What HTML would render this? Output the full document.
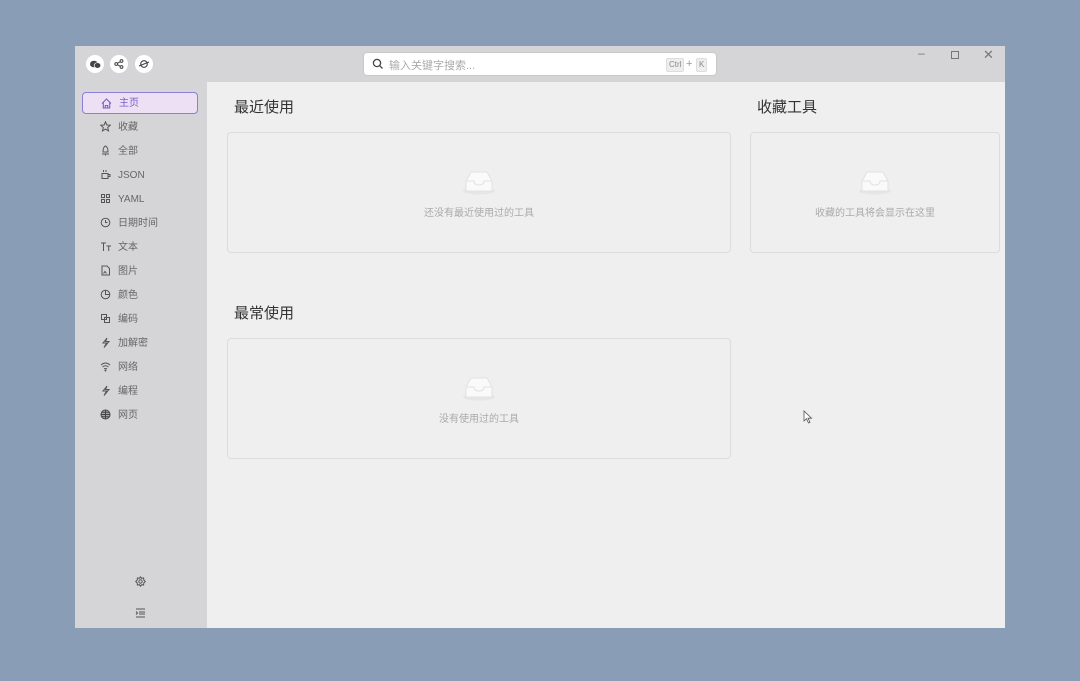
<!DOCTYPE html>
<html><head><meta charset="utf-8"><style>
*{margin:0;padding:0;box-sizing:border-box}
body{width:1080px;height:681px;background:#8a9db6;position:relative;overflow:hidden;font-family:"Liberation Sans","Noto Sans CJK SC",sans-serif}
.win{position:absolute;left:75px;top:46px;width:930px;height:582px;background:#efefef;overflow:hidden}
.title{position:absolute;left:0;top:0;width:930px;height:36px;background:#d5d5d7}
.side{position:absolute;left:0;top:36px;width:132px;height:546px;background:#d5d5d7}
.circ{position:absolute;top:9px;width:18px;height:18px;border-radius:50%;background:#fff;display:flex;align-items:center;justify-content:center}
.search{position:absolute;left:288px;top:6px;width:354px;height:24px;background:#fff;border:1px solid #c8c8c8;border-radius:4px;font-size:11px;color:#aaa}
.kbd{position:absolute;top:5px;height:14px;background:#eee;border:1px solid #ddd;border-radius:2px;font-size:8px;color:#888;line-height:12px;padding:0 2px}
.item{position:absolute;left:7px;width:116px;height:22px;font-size:10px;color:#666;line-height:22px}
.item svg{position:absolute;left:18px;top:5px}
.item span{position:absolute;left:36px;top:1px}
.item.act{border:1px solid #8b7fd8;background:#ede0f4;border-radius:4px;color:#7a5fc8}
.item.act span{top:0}
.h{position:absolute;font-size:15px;color:#333}
.card{position:absolute;border:1px solid #dcdcdc;border-radius:4px;background:#efefef}
.empty{position:absolute;left:0;right:0;text-align:center;font-size:10px;color:#aaa}
.box{position:absolute;left:50%;margin-left:-17px;width:34px;height:26px}
.ctl{position:absolute;top:2px;font-size:12px;color:#777}
</style></head><body>
<div class="win">
<div class="title">
 <div class="circ" style="left:11px"><svg width="11" height="9"><ellipse cx="4" cy="4" rx="4" ry="3.3" fill="#444"/><ellipse cx="7.5" cy="5.5" rx="3.3" ry="2.8" fill="#444" stroke="#fff" stroke-width=".7"/></svg></div>
 <div class="circ" style="left:35px"><svg width="10" height="10" fill="none" stroke="#444" stroke-width="1"><circle cx="7.5" cy="2" r="1.4"/><circle cx="2.2" cy="5" r="1.4"/><circle cx="7.5" cy="8" r="1.4"/><path d="M3.4 4.3 6.3 2.7M3.4 5.7 6.3 7.3"/></svg></div>
 <div class="circ" style="left:60px"><svg width="12" height="12" fill="none" stroke="#444" stroke-width="1.1"><circle cx="6" cy="6" r="3.3"/><path d="M1 8 11 4"/></svg></div>
 <div class="search"><svg style="position:absolute;left:8px;top:5px" width="12" height="12" fill="none" stroke="#444" stroke-width="1.3"><circle cx="5" cy="5" r="3.6"/><path d="M7.6 7.6 10.5 10.5"/></svg><span style="position:absolute;left:25px;top:4px">输入关键字搜索...</span>
 <span class="kbd" style="left:302px">Ctrl</span><span style="position:absolute;left:322px;top:5px;color:#999;font-size:11px">+</span><span class="kbd" style="left:332px">K</span></div>
 <span class="ctl" style="left:843px;top:0">–</span>
 <div style="position:absolute;left:876px;top:5px;width:8px;height:8px;border:1px solid #777"></div>
 <span class="ctl" style="left:908px;top:1px;font-size:13px">✕</span>
</div>
<div class="side">
 <div class="item act" style="top:10px"><svg width="11" height="11" fill="none" stroke="#7a5fc8" stroke-width="1.1"><path d="M1 5.5 5.5 1 10 5.5M2.3 4.5V10H8.7V4.5M4.3 10V7.5h2.4V10"/></svg><span>主页</span></div>
 <div class="item" style="top:34px"><svg width="11" height="11" fill="none" stroke="#555"><path d="M5.5.8 6.9 4 10.3 4.2 7.7 6.5 8.5 9.9 5.5 8.1 2.5 9.9 3.3 6.5.7 4.2 4.1 4Z"/></svg><span>收藏</span></div>
 <div class="item" style="top:58px"><svg width="11" height="11" fill="none" stroke="#555"><path d="M5.5 1C3 2 3 5 3 7H8C8 5 8 2 5.5 1ZM2 9H9M5.5 9V10.5"/></svg><span>全部</span></div>
 <div class="item" style="top:82px"><svg width="11" height="11" fill="none" stroke="#555"><path d="M2 4.5H8V9.5H2ZM8 5.5H10V7.5H8M3.5 1V3M6 1V3"/></svg><span>JSON</span></div>
 <div class="item" style="top:106px"><svg width="11" height="11" fill="none" stroke="#555"><rect x="1.5" y="1.5" width="3" height="3"/><rect x="6.5" y="1.5" width="3" height="3"/><rect x="1.5" y="6.5" width="3" height="3"/><rect x="6.5" y="6.5" width="3" height="3"/></svg><span>YAML</span></div>
 <div class="item" style="top:130px"><svg width="11" height="11" fill="none" stroke="#555"><circle cx="5.5" cy="5.5" r="4.3"/><path d="M5.5 3V5.5H7.5"/></svg><span>日期时间</span></div>
 <div class="item" style="top:154px"><svg width="12" height="11" fill="none" stroke="#555"><path d="M1 2H6M3.5 2V10M6.5 5H11M8.7 5V10"/></svg><span>文本</span></div>
 <div class="item" style="top:178px"><svg width="11" height="11" fill="none" stroke="#555"><path d="M2 1H7L9.5 3.5V10H2Z"/><path d="M3.5 8.5 5 6.5 6.5 8.5"/></svg><span>图片</span></div>
 <div class="item" style="top:202px"><svg width="11" height="11" fill="none" stroke="#555"><circle cx="5.5" cy="5.5" r="4.3"/><path d="M5.5 1.2V5.5H9.8"/></svg><span>颜色</span></div>
 <div class="item" style="top:226px"><svg width="11" height="11" fill="none" stroke="#555"><rect x="1.5" y="1.5" width="5" height="5"/><rect x="4.5" y="4.5" width="5" height="5"/></svg><span>编码</span></div>
 <div class="item" style="top:250px"><svg width="11" height="11" fill="none" stroke="#555"><path d="M7 1 3 6H6.5L4 10.5 9 4.5H5.5Z"/></svg><span>加解密</span></div>
 <div class="item" style="top:274px"><svg width="11" height="11" fill="none" stroke="#555"><path d="M1 4Q5.5 0 10 4M2.5 6Q5.5 3.5 8.5 6M4 8Q5.5 7 7 8"/><circle cx="5.5" cy="9.5" r=".5" fill="#555"/></svg><span>网络</span></div>
 <div class="item" style="top:298px"><svg width="11" height="11" fill="none" stroke="#555"><path d="M7 1 3 6H6.5L4 10.5 9 4.5H5.5Z"/></svg><span>编程</span></div>
 <div class="item" style="top:322px"><svg width="11" height="11" fill="none" stroke="#444"><circle cx="5.5" cy="5.5" r="4.5" fill="#aaa"/><path d="M1 5.5H10M5.5 1V10M1.8 3.3H9.2M1.8 7.7H9.2"/></svg><span>网页</span></div>
 <svg style="position:absolute;left:60px;top:494px" width="11" height="11" fill="none" stroke="#555"><circle cx="5.5" cy="5.5" r="1.7"/><path d="M5.5 .8 6.6 2.3 8.6 2 8.8 4 10.3 5.5 8.8 7 8.6 9 6.6 8.7 5.5 10.2 4.4 8.7 2.4 9 2.2 7 .7 5.5 2.2 4 2.4 2 4.4 2.3Z"/></svg>
 <svg style="position:absolute;left:60px;top:526px" width="11" height="10" fill="none" stroke="#555"><path d="M1 1H10M4 4H10M4 6H10M1 9H10M1 3.5 2.5 5 1 6.5"/></svg>
</div>
<div class="h" style="left:159px;top:50px">最近使用</div>
<div class="h" style="left:682px;top:50px">收藏工具</div>
<div class="h" style="left:159px;top:256px">最常使用</div>
<div class="card" style="left:152px;top:86px;width:504px;height:121px">
 <svg class="box" style="top:36px" viewBox="0 0 34 26"><ellipse cx="17" cy="22" rx="16" ry="3.5" fill="#e6e6e6"/><path d="M4 12 9 3H25L30 12V22H4Z" fill="#fafafa" stroke="#e2e2e2"/><path d="M4 12H12Q12 16 17 16Q22 16 22 12H30" fill="none" stroke="#e2e2e2"/></svg>
 <div class="empty" style="top:71px">还没有最近使用过的工具</div></div>
<div class="card" style="left:675px;top:86px;width:250px;height:121px">
 <svg class="box" style="top:36px" viewBox="0 0 34 26"><ellipse cx="17" cy="22" rx="16" ry="3.5" fill="#e6e6e6"/><path d="M4 12 9 3H25L30 12V22H4Z" fill="#fafafa" stroke="#e2e2e2"/><path d="M4 12H12Q12 16 17 16Q22 16 22 12H30" fill="none" stroke="#e2e2e2"/></svg>
 <div class="empty" style="top:71px">收藏的工具将会显示在这里</div></div>
<div class="card" style="left:152px;top:292px;width:504px;height:121px">
 <svg class="box" style="top:36px" viewBox="0 0 34 26"><ellipse cx="17" cy="22" rx="16" ry="3.5" fill="#e6e6e6"/><path d="M4 12 9 3H25L30 12V22H4Z" fill="#fafafa" stroke="#e2e2e2"/><path d="M4 12H12Q12 16 17 16Q22 16 22 12H30" fill="none" stroke="#e2e2e2"/></svg>
 <div class="empty" style="top:71px">没有使用过的工具</div></div>
<svg style="position:absolute;left:728px;top:364px" width="10" height="14"><path d="M1 1V11L3.5 8.7 5.5 13 7 12.3 5 8.2H8.5Z" fill="#fff" stroke="#555" stroke-width=".8"/></svg>
</div>
</body></html>
